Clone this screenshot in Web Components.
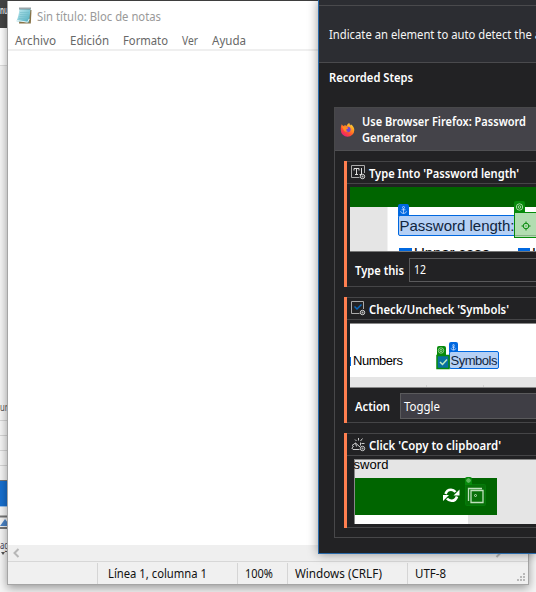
<!DOCTYPE html>
<html lang="es"><head><meta charset="utf-8"><title>Bloc de notas</title>
<style>html,body{margin:0;width:536px;height:592px;overflow:hidden;background:#f5f5f5}</style></head>
<body><desk-top></desk-top>
<script>
const define=(name,html)=>customElements.define(name,class extends HTMLElement{
  constructor(){super();this.attachShadow({mode:'open'}).innerHTML=html;}
});
/* One line of text, condensed or widened to the width in the "w" attribute; "dy" shifts its baseline. */
customElements.define('fit-text',class extends HTMLElement{
  connectedCallback(){
    if(!this.shadowRoot)this.attachShadow({mode:'open'}).innerHTML='<style>:host{display:block;flex:none;white-space:pre}span{display:inline-block;transform-origin:0 50%}</style><span><slot></slot></span>';
    const s=this.shadowRoot.querySelector('span'),w=+this.getAttribute('w'),dy=this.getAttribute('dy')??1;
    this.style.width=w+'px';
    const n=s.getBoundingClientRect().width;
    if(n)s.style.transform='translateY('+dy+'px) scaleX('+w/n+')';
  }
});
define('step-card',`<style>
:host{display:block;box-sizing:border-box;border-left:3px solid #ff7f50;margin-left:9px;height:126px;margin-bottom:10px}
.in{height:100%;box-sizing:border-box;border-top:1px solid #454547;border-bottom:1px solid #454547;display:flex;flex-direction:column}
.h{height:21px;flex:none;border-bottom:1px solid #454547;display:flex;align-items:center;gap:3px;padding-left:4px;box-sizing:content-box;font-weight:600;color:#fff}
::slotted(svg){flex:none;display:block}
.b{flex:1;display:flex;flex-direction:column;padding:3px 0 0 3px}
</style><div class="in"><div class="h"><slot name="icon"></slot><slot name="title"></slot></div><div class="b"><slot></slot></div></div>`);
define('field-row',`<style>
:host{display:flex;align-items:center;padding-left:5px;font-weight:600;color:#fff}
div{box-sizing:border-box;flex:1;height:var(--h,24px);margin-left:var(--gap,5px);border:1px solid #5a5a5c;border-right:0;background:var(--bg,#222224);display:flex;align-items:center;padding-left:4px;font-weight:400}
</style><slot name="label"></slot><div><slot></slot></div>`);
define('notepad-window',`<style>
:host{display:flex;flex-direction:column;box-sizing:border-box;background:#fff;border:1px solid #a5a5a5;border-top:0;box-shadow:0 3px 9px rgba(0,0,0,.38);font:12px/16px "Noto Sans",sans-serif;color:#686868}
.t{height:30px;display:flex;align-items:center;padding-left:8px;color:#999;gap:5px}
.m{height:18px;display:flex;align-items:center;padding-left:7px;gap:14px;border-bottom:2px solid #efefef}
.p{flex:1}.s{height:16px;background:#efefef;padding:0 0 0 4px;display:flex;align-items:center}
.f{height:22px;border-top:1px solid #d7d7d7;background:#f0f0f0;display:flex;align-items:center;color:#111}
.f>div{height:21px;box-sizing:border-box;display:flex;align-items:center;padding-left:7px;border-left:1px solid #d5d5d5;flex:none}
.grip{margin:9px 2px 0 auto}
</style>
<div class="t"><svg width="16" height="18" viewBox="0 0 16 18"><defs><linearGradient id="n" x2="1" y2="1"><stop stop-color="#c5edf2"/><stop offset="1" stop-color="#47a9bd"/></linearGradient></defs><path d="M4 3h11.500l-.7 13.500H3z" fill="#887348"/><path d="M3.500 2h11l-1.500 13.500L.5 14.200Q2.500 10 3.500 2z" fill="url(#n)"/><path d="m1 13.500 10.500 1.700 1.800-3.300" stroke="#e5f5f6" fill="none"/><path d="M4 5.500h9M3.700 7.500h9M3.300 9.500h9M3 11.500h8" stroke="#73bdca" stroke-width=".6"/><path d="M3.500 1.500h11" stroke="#354c54" stroke-width="2" stroke-dasharray="1 1"/></svg><fit-text w="124">Sin título: Bloc de notas</fit-text></div>
<div class="m"><fit-text w="41">Archivo</fit-text><fit-text w="39">Edición</fit-text><fit-text w="45">Formato</fit-text><fit-text w="16">Ver</fit-text><fit-text w="34">Ayuda</fit-text></div>
<div class="p"></div>
<div class="s"><svg width="508" height="12"><path d="M6.500 2 2.500 6l4 4M484.500 2l4 4-4 4" fill="none" stroke="#b7b7b7" stroke-width="2"/></svg></div>
<div class="f"><div style="width:89px;border:0"></div><div style="width:140px;padding-left:10px"><fit-text w="99">Línea 1, columna 1</fit-text></div><div style="width:50px"><fit-text w="28">100%</fit-text></div><div style="width:120px"><fit-text w="87">Windows (CRLF)</fit-text></div><div><fit-text w="31">UTF-8</fit-text></div><svg class="grip" width="9" height="9" fill="#b9b9b9"><path d="M6 0h2v2H6zM3 3h2v2H3zM6 3h2v2H6zM0 6h2v2H0zM3 6h2v2H3zM6 6h2v2H6z"/></svg></div>`);
const target='<circle r="3.200"/><circle r="1.300"/>';
const anchor='<path d="M0-1.500V3.500M-2-.200H2M-3 1.200Q-2.500 3.500 0 3.500T3 1.200"/><circle cy="-2.500" r="1"/>';
define('recorder-panel',`<style>
:host{display:block;box-sizing:border-box;background:#222224;border-left:1px solid #2869a8;border-bottom:1px solid #2869a8;box-shadow:0 0 10px rgba(0,0,0,.4);font:12px/16px "Noto Sans",sans-serif;color:#f5f5f5}
.clip{overflow:hidden;height:553px;display:flex;flex-direction:column}
.top{height:5px;background:#2c2d32;border-bottom:1px solid #4a4a4d;flex:none}
.hint{height:56px;background:#2c2d32;border-bottom:1px solid #4a4a4d;flex:none;display:flex;align-items:center;padding-left:10px}
.rs{height:28px;padding-left:10px;display:flex;align-items:center;font-weight:600;color:#fff;flex:none}
.card{margin:16px 0 0 15px;border:1px solid #48484a;border-right:0;height:429px}
.ch{height:42px;background:#444349;border-bottom:1px solid #505053;display:flex;align-items:center;gap:7px;padding-left:5px;font-weight:600;color:#fff;margin-bottom:10px}
.th{display:block;flex:none}svg text{font-family:"Liberation Sans",Arial,sans-serif}
</style><div class="clip"><div class="top"></div><div class="hint"><fit-text w="212">Indicate an element to auto detect the a</fit-text></div>
<div class="rs"><fit-text w="84">Recorded Steps</fit-text></div>
<div class="card"><div class="ch"><svg width="15" height="15" viewBox="0 0 15 15"><defs><linearGradient id="f" x1="1" y1="0" x2=".25" y2="1"><stop stop-color="#fff04a"/><stop offset=".4" stop-color="#ff981f"/><stop offset=".7" stop-color="#ff4a32"/><stop offset="1" stop-color="#eb1b80"/></linearGradient></defs><path d="M1.700 2.200 3.200 4 5 3.200q1 0 1.500.8Q7.500 1.500 9.300 1q0 1.500 1.500 2.600V2.200q3.500 2.600 3.500 5.700A6.700 6.700 0 0 1 .800 8Q.600 4.500 1.700 2.200Z" fill="url(#f)"/><circle cx="7.800" cy="7.500" r="2.800" fill="#7044d7"/><path d="M1.600 4.300 6 5q3 0 2 1.500L6.200 7.600Q6 9 8 9.500q-3 1-4-1Q3 7 1.600 4.300Z" fill="#ff8b22"/></svg><div><fit-text w="164">Use Browser Firefox: Password</fit-text><fit-text w="55">Generator</fit-text></div></div>
<step-card><svg slot="icon" width="15" height="15" fill="none" stroke="#ddd"><path d="M8.500 12.500H.5V.5h13V8" stroke="#aaa"/><path d="M3 5.500v-2h5v2M5.500 3.500v6M4 9.500h3M8.500 9.500h2M10.500 3v6.500"/><circle cx="11.500" cy="11.500" r="2.200"/><circle cx="11.500" cy="11.500" r=".5"/></svg><fit-text slot="title" w="150">Type Into 'Password length'</fit-text>
<svg class="th" width="186" height="65" viewBox="350 187 186 65"><path fill="#fff" d="M350 187h186v65H350z"/><path fill="#e5e5e5" d="M350 207h37.500v45h-37.500z"/><path fill="#006500" d="M350 187h186v20H350z"/><text x="414" y="258" font-size="15" textLength="76">Upper case</text><text x="532" y="258" font-size="15">L</text><path d="M399 248h13v5h-13zM518 248h12v5h-12z" fill="#0068df"/><rect x="398.500" y="215.500" width="117" height="20" rx="1.500" fill="#b5d0f5" stroke="#0068df"/><text x="399.500" y="231" font-size="15" textLength="115" fill="#10253e">Password length:</text><path d="M398 216v-10q0-2 2-2h7q2 0 2 2v10z" fill="#0068df"/><g transform="translate(403.500 210)" fill="none" stroke="#c4dcff" stroke-width=".8">${anchor}</g><rect x="514.500" y="212.500" width="30" height="25" fill="#b2ddb1" stroke="#078a0b"/><path d="M515 235.500h21" stroke="#8ab38a"/><path d="M514 213v-10q0-2 2-2h7q2 0 2 2v10z" fill="#078a0b"/><g transform="translate(519.500 207)" fill="none" stroke="#c9ebc5" stroke-width=".8">${target}</g><g transform="translate(526 226)" fill="none" stroke="#078a0b"><circle r="2.800"/><path d="M-4.500 0h2M2.500 0h2M0-4.500v2M0 2.500v2M-.5 0h1"/></g><path d="M350 251.500h186" stroke="#777"/></svg>
<field-row style="margin-top:6px"><fit-text slot="label" w="49">Type this</fit-text><fit-text w="12" dy="0">12</fit-text></field-row></step-card>
<step-card><svg slot="icon" width="15" height="15" fill="none" stroke="#aaa"><path d="M8.500 12.500H.5V.5h12V8"/><path d="m3.500 5.500 2.500 2.500 4.500-4.500" stroke="#0868be" stroke-width="1.500"/><circle cx="11.500" cy="11.500" r="2.200" stroke="#ddd"/><circle cx="11.500" cy="11.500" r=".5" stroke="#ddd"/></svg><fit-text slot="title" w="140">Check/Uncheck 'Symbols'</fit-text>
<svg class="th" width="186" height="65" viewBox="350 323 186 65"><path fill="#fff" d="M350 323h186v65H350z"/><path fill="#e5e5e5" d="M350 377h186v11H350z"/><path d="M426.500 385v3M483.500 385v3" stroke="#d0d0d0"/><path d="M350 323.500h186M350 387.500h186" stroke="#888"/><path fill="#0068df" d="M350 357h1v9h-1z"/><text x="353" y="365" font-size="13" textLength="50">Numbers</text><rect x="449.500" y="351.500" width="49" height="17" rx="1.500" fill="#b5d0f5" stroke="#0068df"/><text x="450.500" y="365" font-size="13" textLength="47" fill="#10253e">Symbols</text><path d="M449 352v-8q0-2 2-2h5q2 0 2 2v8z" fill="#0068df"/><g transform="translate(453.500 347.300) scale(.8)" fill="none" stroke="#c4dcff">${anchor}</g><path d="M437 356v-8q0-2 2-2h5q2 0 2 2v8z" fill="#078a0b"/><g transform="translate(441 350.500) scale(.85)" fill="none" stroke="#c9ebc5" stroke-width=".8">${target}</g><rect x="437" y="355.500" width="12" height="13" fill="#0870a0" stroke="#078a0b" stroke-width="1.500"/><path d="m440 362 2.500 2.500 4.500-5" fill="none" stroke="#bcebc0" stroke-width="1.500"/></svg>
<field-row style="margin-top:5px;--h:26px;--gap:10px;--bg:#3f3e45"><fit-text slot="label" w="35">Action</fit-text><fit-text w="36" style="margin-left:-1px">Toggle</fit-text></field-row></step-card>
<step-card style="height:95px"><svg slot="icon" width="15" height="15" fill="none" stroke="#ccc"><path d="M8.500 12.500H2L.8 11l1.700-1.500L1 8.500 4.500 6l4.500 4M4.500 6l1 3.500M7.500 3.500V1M9.500 4l2-2.500M10.500 6.500h3M5.500 4 4 2.500M9.500 5.500v3"/><circle cx="11.500" cy="11.500" r="2.200"/><circle cx="11.500" cy="11.500" r=".5"/></svg><fit-text slot="title" w="132">Click 'Copy to clipboard'</fit-text>
<svg class="th" style="margin-left:4px" width="182" height="65" viewBox="354 459 182 65"><path fill="#e5e5e5" d="M354 459h182v65H354z"/><path fill="#fff" d="M355 515h113v9H355z"/><path fill="#006500" d="M355 478h142v37H355z"/><path d="M354.500 459v65M354 459.500h182" stroke="#888"/><text x="353.500" y="469" font-size="13" textLength="35">sword</text><path d="M445.500 494q1.300-4.300 5.500-4.300 2.700 0 4.500 2.300M457 496.500q-1.300 4.300-5.500 4.300-2.700 0-4.500-2.300" fill="none" stroke="#fff" stroke-width="2.600"/><path d="M459.500 489.500v6h-6zM443 501v-6h6z" fill="#fff"/><rect x="465.500" y="484.500" width="20" height="21" rx="1" fill="#087009" stroke="#057c09"/><path d="M465 485v-6q0-2 2-2h3q2 0 2 2v6z" fill="#078a0b"/><g transform="translate(468.500 480.500) scale(.55)" fill="none" stroke="#c9ebc5">${target}</g><path d="M468.500 501v-12.500H482M471 490.500h12v12h-12z" fill="none" stroke="#bee0bc" stroke-width="1.300"/><circle cx="475.500" cy="495.500" r="1" fill="none" stroke="#bee0bc"/></svg></step-card>
</div></div>`);
define('desk-top',`<style>
:host{display:block;position:relative;width:536px;height:592px;overflow:hidden;background:#f5f5f5;font:11px/14px "Noto Sans",sans-serif;color:#555}
.back{width:8px;height:592px;overflow:hidden;display:flex;flex-direction:column}
.a{height:28px;background:#444;color:#eee;box-sizing:border-box;padding-top:3px;font-weight:600}
.bar{height:1px;background:#444}
.lines{height:60px;background:repeating-linear-gradient(#d5d5d5 0 1px,transparent 1px 15px)}
.blue{height:25px;background:#176fce;border-top:1px solid #777;border-bottom:1px solid #9bc3ed}
notepad-window{position:absolute;left:7px;top:1px;width:522px;height:584px}
recorder-panel{position:absolute;left:318px;top:0;width:218px;height:554px}
.strip{position:absolute;left:0;top:0;width:536px}
</style><div class="back"><div class="a"><fit-text w="8" dy="0">nu</fit-text></div><div style="height:37px;background:#fff;border-bottom:1px solid #ddd"></div><div style="height:334px"></div><div style="height:20px"><fit-text w="8" dy="0">ur</fit-text></div><div class="lines"></div><div class="blue"></div><div style="height:8px"></div><svg width="8" height="14" style="flex:none"><path d="M0 1.500h8M0 13h8" stroke="#777" stroke-width="2"/><path d="m0 11 5-7 3 4v3z" fill="#4b83c5"/></svg><div style="height:28px;padding-top:9px"><fit-text w="9" dy="0" style="color:#445">ag</fit-text><svg width="8" height="4" style="display:block"><path d="M1 0h4L3 3z" fill="#555"/></svg></div></div>
<div class="bar strip"></div><notepad-window></notepad-window><recorder-panel></recorder-panel>`);
</script></body></html>
